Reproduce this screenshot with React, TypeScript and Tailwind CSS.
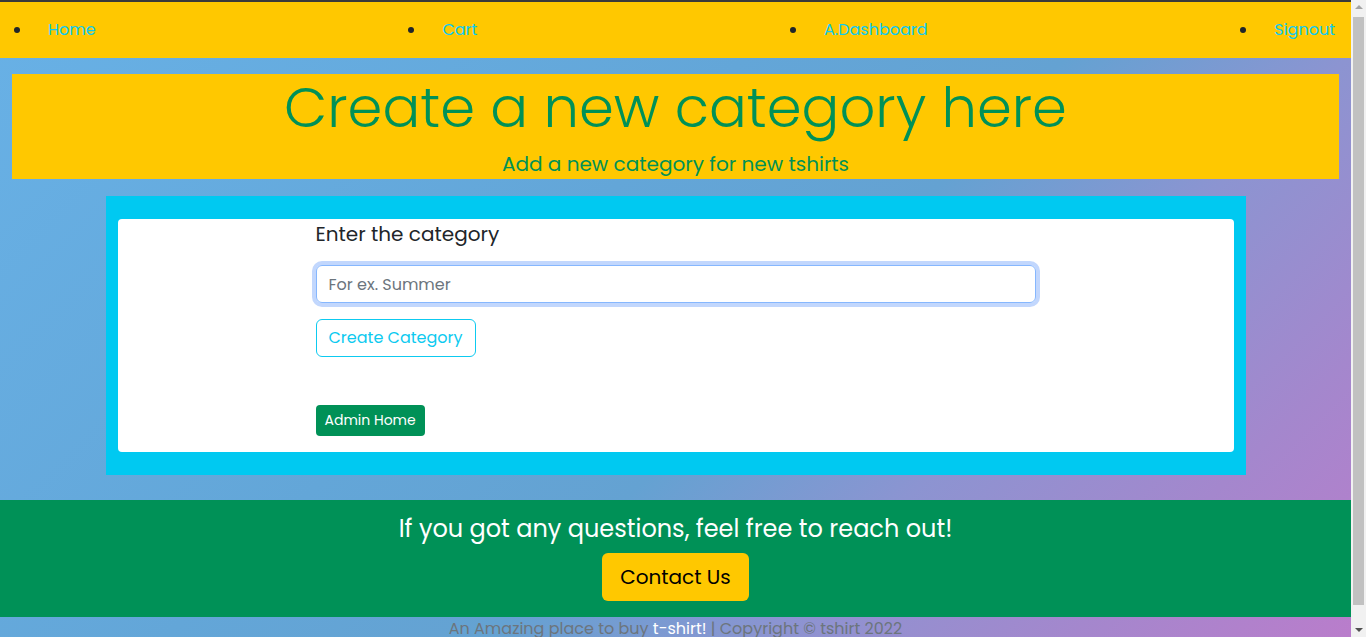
import { useState } from 'react'

const links = ['Home', 'Cart', 'A.Dashboard', 'Signout']

function Scrollbar() {
  return (
    <div className="fixed top-0 right-0 flex h-full w-[15px] flex-col items-center bg-[#f1f1f1]">
      <div className="mt-[5px] h-0 w-0 border-x-[4px] border-b-[4px] border-x-transparent border-b-[#a3a3a3]" />
      <div className="mt-[8px] w-[11px] flex-1 bg-[#c1c1c1]" />
      <div className="mt-[23px] mb-[5px] h-0 w-0 border-x-[4px] border-t-[4px] border-x-transparent border-t-[#505050]" />
    </div>
  )
}

export default function App() {
  const [name, setName] = useState('')

  return (
    <div className="min-h-screen w-[1351px] bg-[linear-gradient(135deg,#68b1e6_0%,#63a6d8_40%,#64a2d2_56%,#8c94d1_70%,#a487cd_85%,#bb7ccb_100%)] font-['Poppins','Open_Sans',sans-serif] text-[#212529]">
      {/* Nav */}
      <nav className="border-t-2 border-[#3a3a3a] bg-[#ffc800]">
        <ul className="flex h-14 items-center justify-between pl-[14px] pr-[16px]">
          {links.map((l) => (
            <li key={l} className="flex items-center">
              <span className="mr-[28px] h-[6px] w-[6px] rounded-full bg-[#212529]" />
              <a href="#" className="text-[16px] text-[#0dcaf0]">
                {l}
              </a>
            </li>
          ))}
        </ul>
      </nav>

      {/* Header */}
      <div className="mx-3 mt-4 bg-[#ffc800] text-center text-[#009157]">
        <h1 className="text-[56px] leading-[67px] font-light">Create a new category here</h1>
        <p className="mt-[8px] text-[20px] leading-[30px]">Add a new category for new tshirts</p>
      </div>

      {/* Form card */}
      <div className="mx-auto mt-[17px] w-[1140px] bg-[#00c9f1] px-3 py-[23px]">
        <div className="rounded bg-white pb-[16px]">
          <div className="ml-[198px] w-[720px]">
            <label className="block text-[20px] leading-[30px] text-[#212529]">Enter the category</label>
            <input
              value={name}
              onChange={(e) => setName(e.target.value)}
              placeholder="For ex. Summer"
              className="mt-[16px] block h-[38px] w-full rounded-[6px] border border-[#86b7fe] px-3 text-[16px] text-[#212529] shadow-[0_0_0_4px_#c2d7fd] outline-none placeholder:text-[#6c757d]"
            />
            <button className="mt-[16px] h-[38px] rounded-[6px] border border-[#0dcaf0] px-3 text-[16px] text-[#0dcaf0]">
              Create Category
            </button>
            <div className="pt-[48px]">
              <button className="h-[31px] rounded-[4px] bg-[#009157] px-[9px] text-[14px] text-white">Admin Home</button>
            </div>
          </div>
        </div>
      </div>

      {/* Footer */}
      <footer className="mt-[25px]">
        <div className="flex h-[117px] flex-col items-center bg-[#009157] pt-[11px]">
          <h4 className="text-[24px] leading-[36px] text-white">If you got any questions, feel free to reach out!</h4>
          <button className="mt-[6px] h-[48px] rounded-[6px] bg-[#ffc800] px-[18px] text-[20px] text-black">Contact Us</button>
        </div>
        <div className="pb-4 text-center">
          <span className="text-[16px] leading-[24px] text-[#6c757d]">
            An Amazing place to buy <span className="text-white">t-shirt!</span> | Copyright © tshirt 2022
          </span>
        </div>
      </footer>

      <Scrollbar />
    </div>
  )
}
